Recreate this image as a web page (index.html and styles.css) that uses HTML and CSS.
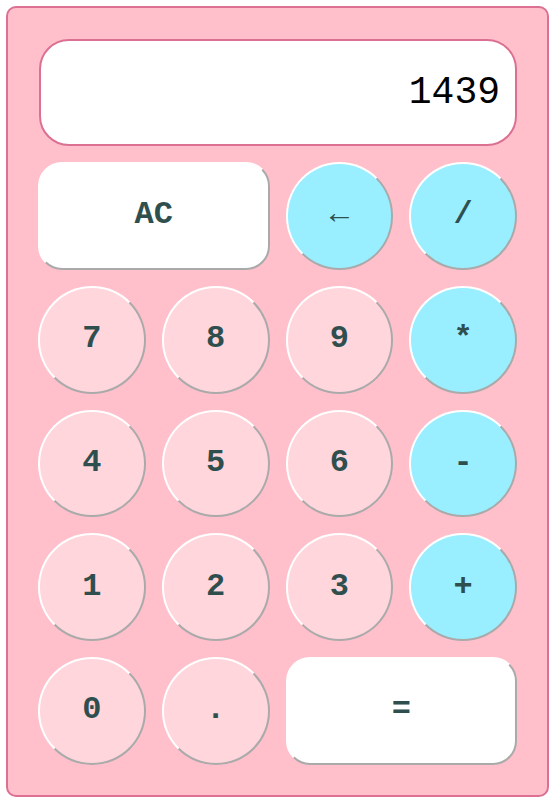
FILE: index.html
```html
<!DOCTYPE html>
<html>
<head>
<meta charset="utf-8">
<link rel="stylesheet" href="styles.css">
</head>
<body>
<div class="calc">
  <div class="display">1439</div>
  <div class="keys">
    <button class="key wide">AC</button>
    <button class="key op">←</button>
    <button class="key op">/</button>
    <button class="key">7</button>
    <button class="key">8</button>
    <button class="key">9</button>
    <button class="key op">*</button>
    <button class="key">4</button>
    <button class="key">5</button>
    <button class="key">6</button>
    <button class="key op">-</button>
    <button class="key">1</button>
    <button class="key">2</button>
    <button class="key">3</button>
    <button class="key op">+</button>
    <button class="key">0</button>
    <button class="key">.</button>
    <button class="key wide">=</button>
  </div>
</div>
</body>
</html>
```
FILE: styles.css
```css
html, body {
  margin: 0;
  padding: 0;
  background: #ffffff;
}
.calc {
  margin: 6px;
  width: 479px;
  padding: 30px;
  background: #ffc0cb;
  border: 2px solid #db7093;
  border-radius: 10px;
  display: flex;
  flex-direction: column;
  gap: 16px;
}
.display {
  box-sizing: border-box;
  height: 107px;
  margin: 1px 0 0 1px;
  background: #ffffff;
  border: 2px solid #db7093;
  border-radius: 30px;
  display: flex;
  align-items: center;
  justify-content: flex-end;
  padding: 0 15px;
  font-family: "Liberation Mono", monospace;
  font-size: 38px;
  color: #000000;
}
.keys {
  display: grid;
  grid-template-columns: repeat(4, 1fr);
  grid-auto-rows: 107.75px;
  gap: 16px;
}
.key {
  box-sizing: border-box;
  margin: 0;
  padding: 0 0 2px;
  width: 100%;
  height: 100%;
  border-radius: 50%;
  border-style: solid;
  border-width: 2px;
  border-color: #ffffff #aaaaaa #aaaaaa #ffffff;
  background: #ffd6dc;
  font-family: "Liberation Mono", monospace;
  font-weight: bold;
  font-size: 32px;
  color: #2f4f4f;
}
.key.op {
  background: #99eeff;
}
.key.wide {
  grid-column: span 2;
  border-radius: 24px;
  background: #ffffff;
}
```
